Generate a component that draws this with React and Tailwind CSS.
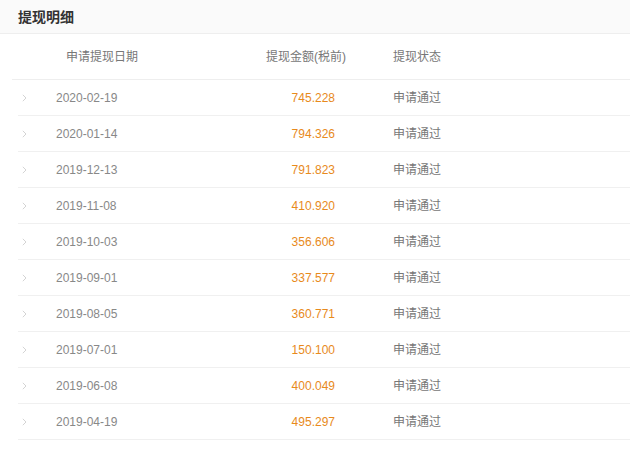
import React from 'react'

const rows = [
  ['2020-02-19', '745.228'],
  ['2020-01-14', '794.326'],
  ['2019-12-13', '791.823'],
  ['2019-11-08', '410.920'],
  ['2019-10-03', '356.606'],
  ['2019-09-01', '337.577'],
  ['2019-08-05', '360.771'],
  ['2019-07-01', '150.100'],
  ['2019-06-08', '400.049'],
  ['2019-04-19', '495.297'],
]

function Chevron() {
  return (
    <svg width="5" height="8" viewBox="0 0 5 8" fill="none">
      <path d="M0.8 0.8 L4 4 L0.8 7.2" stroke="#d4d4d4" strokeWidth="1" />
    </svg>
  )
}

export default function App() {
  return (
    <div className="w-[630px] h-[463px] bg-white font-['Liberation_Sans','Noto_Sans_CJK_SC',sans-serif] text-[12px] overflow-hidden">
      <div className="h-[34px] bg-[#fafafa] border-b border-[#eeeeee] flex items-center pl-[18px]">
        <h2 className="text-[14px] font-bold text-[#333] leading-none">提现明细</h2>
      </div>
      <div className="ml-[12px] h-[46px] border-b border-[#eeeeee] flex items-center text-[#777] pt-[1px]">
        <div className="w-[254px] pl-[54px]">申请提现日期</div>
        <div className="w-[127px]">提现金额(税前)</div>
        <div>提现状态</div>
      </div>
      {rows.map(([date, amount]) => (
        <div key={date} className="ml-[18px] h-[36px] border-b border-[#f0f0f0] flex items-center">
          <div className="w-[38px] pl-[4px] flex items-center"><Chevron /></div>
          <div className="w-[200px] text-[#888]">{date}</div>
          <div className="w-[79px] text-right text-[#e88a1c]">{amount}</div>
          <div className="ml-[58px] text-[#777]">申请通过</div>
        </div>
      ))}
    </div>
  )
}
